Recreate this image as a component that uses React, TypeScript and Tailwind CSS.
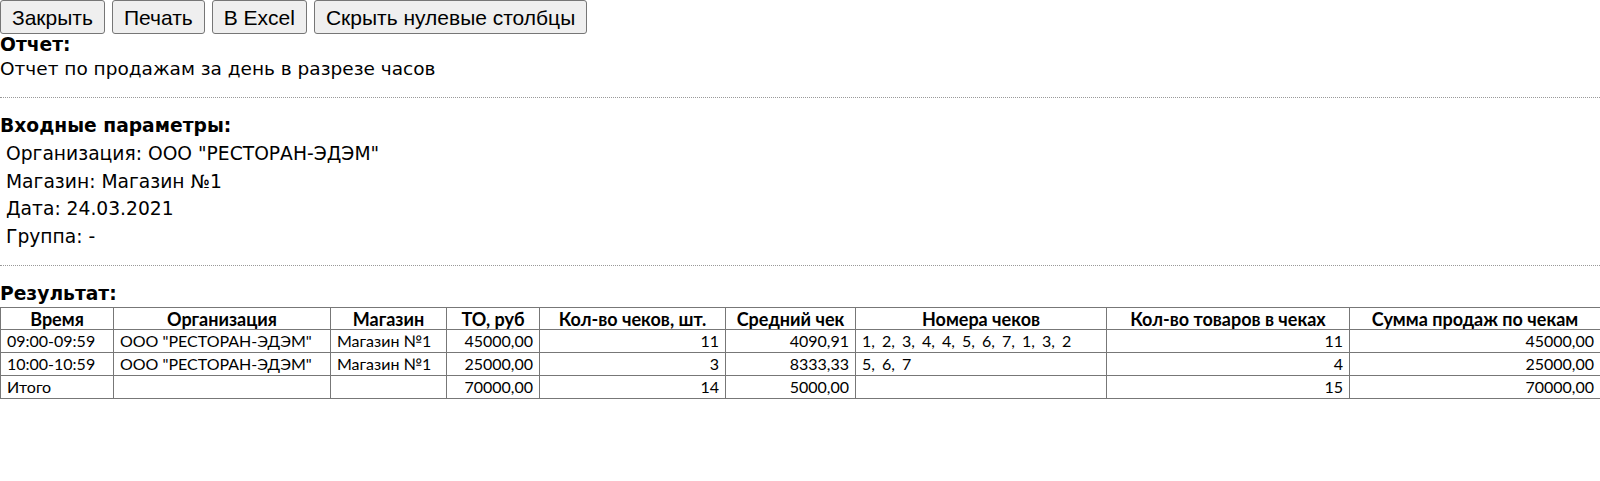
import React from "react";

const body = { fontFamily: '"DejaVu Sans", Verdana, sans-serif' };
const tableFont = { fontFamily: 'Lato, "Open Sans", sans-serif' };

const rows = [
  ["09:00-09:59", 'ООО "РЕСТОРАН-ЭДЭМ"', "Магазин №1", "45000,00", "11", "4090,91", "1, 2, 3, 4, 4, 5, 6, 7, 1, 3, 2", "11", "45000,00"],
  ["10:00-10:59", 'ООО "РЕСТОРАН-ЭДЭМ"', "Магазин №1", "25000,00", "3", "8333,33", "5, 6, 7", "4", "25000,00"],
  ["Итого", "", "", "70000,00", "14", "5000,00", "", "15", "70000,00"],
];

const headers = ["Время", "Организация", "Магазин", "ТО, руб", "Кол-во чеков, шт.", "Средний чек", "Номера чеков", "Кол-во товаров в чеках", "Сумма продаж по чекам"];
const align = ["text-left", "text-left", "text-left", "text-right", "text-right", "text-right", "text-left [word-spacing:3px]", "text-right", "text-right"];

function Btn({ children }: { children: React.ReactNode }) {
  return (
    <button
      className="h-[34px] px-[11px] border border-[#767676] rounded-[3px] bg-[#efefef] text-[21px] text-black leading-none"
      style={{ fontFamily: '"Liberation Sans", Arial, sans-serif' }}
    >
      {children}
    </button>
  );
}

export default function App() {
  return (
    <div className="w-[1600px] h-[481px] bg-white text-black overflow-hidden" style={body}>
      <div className="flex gap-[7px] h-[34px]">
        <Btn>Закрыть</Btn>
        <Btn>Печать</Btn>
        <Btn>В Excel</Btn>
        <Btn>Скрыть нулевые столбцы</Btn>
      </div>
      <div className="font-bold text-[18.7px] leading-[22px]">Отчет:</div>
      <div className="text-[18.5px] leading-[26px]">Отчет по продажам за день в разрезе часов</div>
      <div className="mt-[15px] border-t border-dotted border-[#999]" />
      <div className="mt-[17px] font-bold text-[18.7px] leading-[22px]">Входные параметры:</div>
      <div className="mt-[3px] pl-[6px] text-[18.7px] leading-[27.5px]">
        <div>Организация: ООО "РЕСТОРАН-ЭДЭМ"</div>
        <div>Магазин: Магазин №1</div>
        <div>Дата: 24.03.2021</div>
        <div>Группа: -</div>
      </div>
      <div className="mt-[15px] border-t border-dotted border-[#999]" />
      <div className="mt-[17px] font-bold text-[18.7px] leading-[22px]">Результат:</div>
      <table className="mt-[2px] w-[1600px] table-fixed border-collapse border border-[#333]" style={tableFont}>
        <colgroup>
          <col className="w-[113px]" />
          <col className="w-[217px]" />
          <col className="w-[116px]" />
          <col className="w-[93px]" />
          <col className="w-[186px]" />
          <col className="w-[130px]" />
          <col className="w-[251px]" />
          <col className="w-[243px]" />
          <col className="w-[251px]" />
        </colgroup>
        <thead>
          <tr className="h-[22px]">
            {headers.map((h, i) => (
              <th key={i} className="border border-[#777] px-[4px] font-bold text-[18px] text-center leading-[20px] whitespace-nowrap">
                {h}
              </th>
            ))}
          </tr>
        </thead>
        <tbody>
          {rows.map((r, ri) => (
            <tr key={ri} className="h-[23px]">
              {r.map((c, ci) => (
                <td key={ci} className={`border border-[#777] px-[6px] text-[16px] leading-[20px] whitespace-nowrap ${align[ci]}`}>
                  {c}
                </td>
              ))}
            </tr>
          ))}
        </tbody>
      </table>
    </div>
  );
}
